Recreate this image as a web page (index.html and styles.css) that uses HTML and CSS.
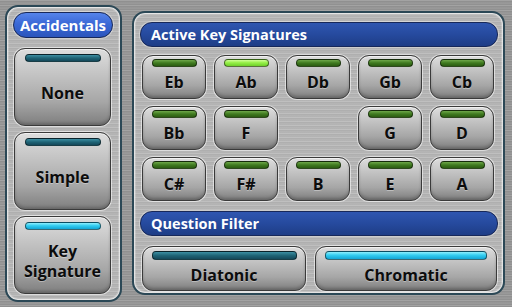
FILE: index.html
```html
<!DOCTYPE html>
<html lang="en">
<head>
  <meta charset="UTF-8">
  <meta name="viewport" content="width=device-width, initial-scale=1.0">
  <title>Key Signatures</title>
  <link rel="stylesheet" href="styles.css">
</head>
<body>

  <!-- Accidentals column -->
  <div class="panel side">
    <div class="pill">Accidentals</div>
    <button class="btn big"><span class="bar teal"></span><span class="label">None</span></button>
    <button class="btn big"><span class="bar teal"></span><span class="label">Simple</span></button>
    <button class="btn big"><span class="bar cyan"></span><span class="label">Key<br>Signature</span></button>
  </div>

  <!-- Key signatures + filter -->
  <div class="panel main">
    <div class="header">Active Key Signatures</div>
    <div class="keys">
      <button class="btn key"><span class="bar green"></span><span class="label">Eb</span></button>
      <button class="btn key"><span class="bar lime"></span><span class="label">Ab</span></button>
      <button class="btn key"><span class="bar green"></span><span class="label">Db</span></button>
      <button class="btn key"><span class="bar green"></span><span class="label">Gb</span></button>
      <button class="btn key"><span class="bar green"></span><span class="label">Cb</span></button>

      <button class="btn key"><span class="bar green"></span><span class="label">Bb</span></button>
      <button class="btn key"><span class="bar green"></span><span class="label">F</span></button>
      <div class="empty"></div>
      <button class="btn key"><span class="bar green"></span><span class="label">G</span></button>
      <button class="btn key"><span class="bar green"></span><span class="label">D</span></button>

      <button class="btn key"><span class="bar green"></span><span class="label">C#</span></button>
      <button class="btn key"><span class="bar green"></span><span class="label">F#</span></button>
      <button class="btn key"><span class="bar green"></span><span class="label">B</span></button>
      <button class="btn key"><span class="bar green"></span><span class="label">E</span></button>
      <button class="btn key"><span class="bar green"></span><span class="label">A</span></button>
    </div>
    <div class="header">Question Filter</div>
    <div class="filters">
      <button class="btn wide diatonic"><span class="bar teal"></span><span class="label">Diatonic</span></button>
      <button class="btn wide chromatic"><span class="bar cyan"></span><span class="label">Chromatic</span></button>
    </div>
  </div>

</body>
</html>
```

FILE: styles.css
```css
html, body {
  margin: 0;
  padding: 0;
  width: 512px;
  height: 307px;
  overflow: hidden;
}
body {
  font-family: "Open Sans", "DejaVu Sans", sans-serif;
  font-weight: bold;
  background-color: #999;
  background-image:
    repeating-linear-gradient(180deg, rgba(255,255,255,0.10) 0px, rgba(255,255,255,0.10) 1px, rgba(0,0,0,0.06) 1px, rgba(0,0,0,0.06) 2px, rgba(255,255,255,0.04) 3px, rgba(0,0,0,0.08) 5px);
  display: flex;
  align-items: flex-start;
  padding: 5px 7px 0 5px;
  box-sizing: border-box;
  gap: 10px;
}
.panel {
  box-sizing: border-box;
  border: 2px solid #2b4856;
  border-radius: 13px;
  background-color: #b8b8b8;
  background-image:
    repeating-linear-gradient(180deg, rgba(255,255,255,0.10) 0px, rgba(255,255,255,0.10) 1px, rgba(0,0,0,0.05) 1px, rgba(0,0,0,0.05) 2px, rgba(255,255,255,0.03) 3px, rgba(0,0,0,0.06) 4px);
  box-shadow: inset 0 0 0 1px rgba(255,255,255,0.55), inset 0 0 0 2px rgba(255,255,255,0.2);
  display: flex;
  flex-direction: column;
}
.side {
  width: 117px;
  height: 297px;
  padding: 5px 9px 5px 7px;
  gap: 6px;
  align-items: center;
}
.main {
  width: 373px;
  height: 284px;
  margin-top: 6px;
  padding: 9px 5px 3px 6px;
}

/* blue title bars */
.pill, .header {
  box-sizing: border-box;
  color: white;
  border: 1px solid #17285a;
  box-shadow: 0 0 0 1px rgba(255,255,255,0.35);
}
.pill {
  width: 100px;
  height: 26px;
  border-radius: 13px;
  font-size: 15px;
  line-height: 24px;
  text-align: center;
  margin-left: 1px;
  margin-bottom: 4px;
  background: linear-gradient(180deg, #5584ea 0%, #3a68d6 45%, #2b55bc 100%);
}
.header {
  width: 358px;
  height: 25px;
  border-radius: 12px;
  font-size: 14.5px;
  line-height: 23px;
  padding-left: 10px;
  background: linear-gradient(180deg, #2f56b0 0%, #264a9e 50%, #1e3d86 100%);
}

/* grey buttons */
.btn {
  box-sizing: border-box;
  font-family: inherit;
  font-weight: bold;
  color: #0c0c0c;
  padding: 0;
  border: 1px solid #3a3a3a;
  border-radius: 11px;
  background: linear-gradient(180deg, #dedede 0%, #c6c6c6 30%, #a6a6a6 70%, #7e7e7e 100%);
  box-shadow: 0 0 0 1px rgba(255,255,255,0.55), inset 0 1px 0 rgba(255,255,255,0.6), inset 0 -2px 3px rgba(0,0,0,0.2);
  display: flex;
  flex-direction: column;
  align-items: center;
  text-shadow: 0 1px 0 rgba(255,255,255,0.35);
}
.btn .label {
  flex: 1;
  display: flex;
  align-items: center;
  justify-content: center;
  text-align: center;
  line-height: 20px;
}
.bar {
  display: block;
  flex: none;
  border-radius: 4px;
  border: 1px solid rgba(0,0,0,0.55);
  box-sizing: border-box;
}
.teal { background: linear-gradient(180deg, #3d8fa3 0%, #1f6476 50%, #14485a 100%); }
.cyan { background: linear-gradient(180deg, #8ef0ff 0%, #33cdf0 45%, #12a6d6 100%); }
.green { background: linear-gradient(180deg, #6fa84a 0%, #3f7a1f 50%, #2c5c12 100%); }
.lime { background: linear-gradient(180deg, #d2ff9a 0%, #96f048 45%, #6fd02a 100%); }

.big {
  width: 97px;
  height: 78px;
  font-size: 16px;
}
.big .bar {
  width: 76px;
  height: 8px;
  margin-top: 5px;
}
.big .label { padding-bottom: 2px; }

.keys {
  display: grid;
  grid-template-columns: repeat(5, 64px);
  grid-auto-rows: 44px;
  column-gap: 8px;
  row-gap: 7px;
  margin: 8px 0 10px 2px;
}
.key { font-size: 16px; }
.key .bar {
  width: 45px;
  height: 8px;
  margin-top: 3px;
  margin-left: 1px;
}
.key .label { padding-bottom: 1px; }

.filters {
  display: flex;
  gap: 9px;
  margin: 10px 0 0 2px;
}
.wide {
  height: 45px;
  font-size: 16px;
}
.wide .bar {
  height: 9px;
  margin-top: 4px;
}
.diatonic { width: 164px; }
.diatonic .bar { width: 145px; }
.chromatic { width: 182px; }
.chromatic .bar { width: 162px; }
```
